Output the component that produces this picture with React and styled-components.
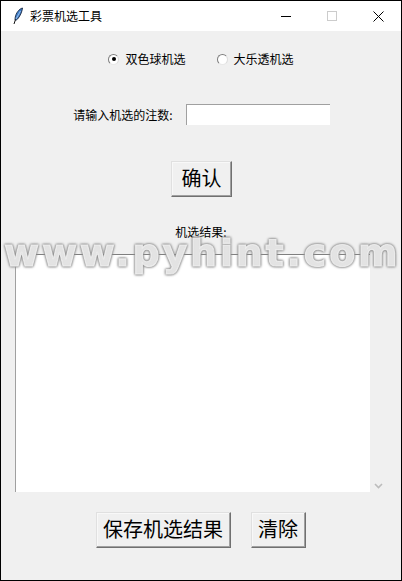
import React from "react";
import styled, { createGlobalStyle } from "styled-components";

const Global = createGlobalStyle`
  html, body { margin: 0; padding: 0; background: #f0f0f0; }
  * { box-sizing: border-box; }
`;
const cjk = `"Noto Sans CJK SC", "Liberation Sans", sans-serif`;

const Win = styled.div`
  position: relative; width: 402px; height: 581px; border: 1px solid #000;
  background: #f0f0f0; font-family: ${cjk}; color: #000; display: flex; flex-direction: column; overflow: hidden;
`;
const TitleBar = styled.div`
  height: 30px; flex: none; background: #fff; display: flex; align-items: center; padding-left: 11px;
`;
const Title = styled.span`
  font-size: 12px; line-height: 16px; margin-left: 6px; flex: 1;
`;
const WinBtn = styled.div`
  width: 46px; height: 30px; flex: none; display: flex; align-items: center; justify-content: center;
`;
const Body = styled.div`
  flex: 1; display: flex; flex-direction: column; align-items: center;
`;
const RadioRow = styled.div`
  display: flex; margin-top: 19px; height: 18px; align-items: center; gap: 31px;
`;
const RadioLabel = styled.label`
  display: flex; align-items: center; gap: 6px; font-size: 12px; line-height: 18px;
`;
const RadioDot = styled.span`
  width: 11px; height: 11px; border-radius: 50%; background: #fff; flex: none;
  border: 1px solid; border-color: #7d7d7d #dcdcdc #e8e8e8 #7d7d7d;
  display: flex; align-items: center; justify-content: center;
  &::after { content: ""; width: 4px; height: 4px; border-radius: 50%; background: ${(p) => (p.$on ? "#000" : "transparent")}; }
`;
const InputRow = styled.div`
  display: flex; align-items: center; margin-top: 36px; height: 21px; gap: 13px; margin-left: 1px;
`;
const FieldLabel = styled.span`
  font-size: 12px; line-height: 18px;
`;
const Field = styled.div`
  width: 144px; height: 21px; background: #fff; border-top: 1px solid #a0a0a0; border-left: 1px solid #a0a0a0;
`;
const TkButton = styled.button`
  width: ${(p) => p.$w}px; height: 36px; padding: 0 0 2px; background: #f0f0f0; font-family: ${cjk}; font-size: 20px; line-height: 30px; color: #000;
  border: 1px solid; border-color: #e0e0e0 #707070 #707070 #e0e0e0;
  box-shadow: inset -1px -1px 0 #a0a0a0, inset 1px 1px 0 #f8f8f8;
`;
const ConfirmWrap = styled.div`
  margin-top: 36px; margin-left: 1px; display: flex;
`;
const ResultLabel = styled.div`
  margin-top: 26px; font-size: 12px; line-height: 18px; height: 18px;
`;
const TextRow = styled.div`
  align-self: stretch; display: flex; padding-left: 14px; margin-top: 13px; height: 238px;
`;
const TextBox = styled.div`
  width: 355px; background: #fff; border-top: 1px solid #7f7f7f; border-left: 1px solid #a0a0a0;
`;
const ScrollBar = styled.div`
  width: 16px; display: flex; flex-direction: column; justify-content: space-between; align-items: center; padding: 6px 0 3px;
`;
const BottomRow = styled.div`
  display: flex; gap: 20px; margin-top: 20px; margin-left: -1px;
`;
const Watermark = styled.div`
  position: absolute; left: 3px; top: 230px; pointer-events: none;
  font-family: "DejaVu Sans", sans-serif; font-weight: 700; font-size: 38px; line-height: 44px; letter-spacing: 2.8px; white-space: nowrap;
  color: rgba(240,240,240,0.88);
  -webkit-text-stroke: 1.2px rgba(240,240,240,0.88);
  filter: drop-shadow(0 0 1px #808080) drop-shadow(0 0 1px #999);
`;

const Feather = () => (
  <svg width="12" height="18" viewBox="0 0 12 18">
    <path d="M10.5 1C7 2 4 6 3.2 10.5L3 13c.8.3 1.6 0 2.4-.8C8 9.500 10 5 10.500 1Z" fill="#3f7fcc" stroke="#14233c" strokeWidth=".9" />
    <path d="M8.500 4 4 12" stroke="#bcd6f0" strokeWidth=".7" fill="none" />
    <path d="M3.500 12.500 2 17" stroke="#111" strokeWidth="1" fill="none" />
  </svg>
);
const Chevron = ({ up }) => (
  <svg width="9" height="6" viewBox="0 0 9 6">
    <path d={up ? "M1 5 4.5 1.5 8 5" : "M1 1 4.5 4.5 8 1"} fill="none" stroke="#bcbcbc" strokeWidth="1.6" />
  </svg>
);

export default function App() {
  return (
    <Win>
      <Global />
      <TitleBar>
        <Feather />
        <Title>彩票机选工具</Title>
        <WinBtn>
          <svg width="10" height="10" viewBox="0 0 10 10"><path d="M0 5.5h10" stroke="#000" /></svg>
        </WinBtn>
        <WinBtn>
          <svg width="10" height="10" viewBox="0 0 10 10"><rect x=".5" y=".5" width="9" height="9" fill="none" stroke="#ccc" /></svg>
        </WinBtn>
        <WinBtn>
          <svg width="11" height="11" viewBox="0 0 11 11"><path d="M.5.5l10 10M10.5.5l-10 10" stroke="#000" /></svg>
        </WinBtn>
      </TitleBar>
      <Body>
        <RadioRow>
          <RadioLabel><RadioDot $on />双色球机选</RadioLabel>
          <RadioLabel><RadioDot />大乐透机选</RadioLabel>
        </RadioRow>
        <InputRow>
          <FieldLabel>请输入机选的注数:</FieldLabel>
          <Field />
        </InputRow>
        <ConfirmWrap><TkButton $w={61}>确认</TkButton></ConfirmWrap>
        <ResultLabel>机选结果:</ResultLabel>
        <TextRow>
          <TextBox />
          <ScrollBar><Chevron up /><Chevron /></ScrollBar>
        </TextRow>
        <BottomRow>
          <TkButton $w={135}>保存机选结果</TkButton>
          <TkButton $w={55}>清除</TkButton>
        </BottomRow>
      </Body>
      <Watermark>www.pyhint.com</Watermark>
    </Win>
  );
}
